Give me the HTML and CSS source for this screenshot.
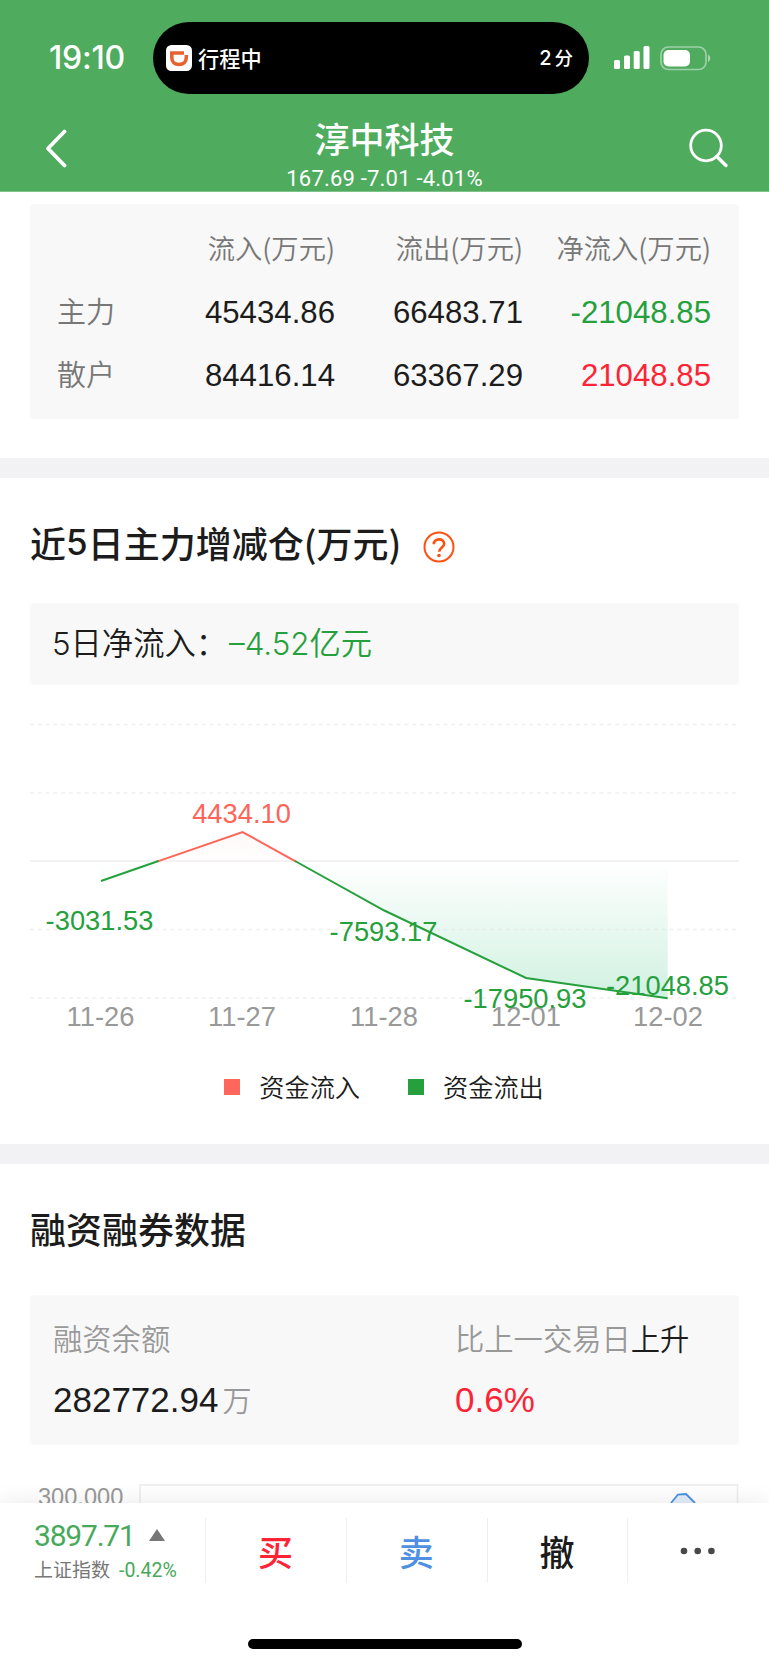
FILE: index.html
```
<!DOCTYPE html>
<html lang="zh-CN">

<head>
  <meta charset="UTF-8" />
  <meta name="viewport" content="width=device-width, initial-scale=1.0" />
  <title>淳中科技</title>
  <link rel="stylesheet" href="styles.css">
</head>

<body>
  <div class="app">
    <!-- Header -->
    <header class="header">
      <div class="status-bar">
        <span class="time">19:10</span>
        <div class="island">
          <svg class="trip-icon" viewBox="0 0 26 26">
            <rect width="26" height="26" rx="5.5" fill="#fff" />
            <path d="M18 8H5.800v4.500c0 4.300 3 7 7.200 7s7.300-2.700 7.300-7V10" fill="none" stroke="#e8622f" stroke-width="3.600" />
          </svg>
          <span class="trip">行程中</span>
          <span class="eta">2<i>分</i></span>
        </div>
        <svg class="signal" viewBox="0 0 36 24" fill="#fff">
          <rect x="0" y="14" width="6" height="9" rx="1.500" />
          <rect x="10" y="9.500" width="6" height="13.500" rx="1.500" />
          <rect x="19.700" y="5" width="6" height="18" rx="1.500" />
          <rect x="29.500" y="0" width="6" height="23" rx="1.500" />
        </svg>
        <svg class="battery" viewBox="0 0 51 25">
          <rect x="1" y="1" width="45" height="22.500" rx="7.500" fill="none" stroke="#fff" stroke-opacity=".45" stroke-width="1.700" />
          <rect x="3.500" y="4" width="26.500" height="16.500" rx="5" fill="#fff" />
          <path d="M48 8.500c3 1.500 3 6 0 7.500z" fill="#fff" fill-opacity=".5" />
        </svg>
      </div>
      <div class="nav-bar">
        <svg class="back" viewBox="0 0 24 40">
          <path d="M19.500 3.500L3 20.500 19.500 37.500" fill="none" stroke="#fff" stroke-width="3.800" stroke-linecap="round" stroke-linejoin="round" />
        </svg>
        <div class="stock">
          <h1>淳中科技</h1>
          <p>167.69 -7.01 -4.01%</p>
        </div>
        <svg class="search" viewBox="0 0 40 40">
          <circle cx="17" cy="17.500" r="15.300" fill="none" stroke="#fff" stroke-width="2.800" />
          <path d="M27.800 28.500L37 37.500" stroke="#fff" stroke-width="3.400" stroke-linecap="round" />
        </svg>
      </div>
    </header>

    <!-- Money flow table -->
    <section class="flow">
      <div class="card flow-table">
        <span></span>
        <span class="th">流入(万元)</span>
        <span class="th">流出(万元)</span>
        <span class="th">净流入(万元)</span>
        <span class="name">主力</span>
        <span class="num">45434.86</span>
        <span class="num">66483.71</span>
        <span class="num green">-21048.85</span>
        <span class="name">散户</span>
        <span class="num">84416.14</span>
        <span class="num">63367.29</span>
        <span class="num red">21048.85</span>
      </div>
    </section>

    <!-- 5 day chart -->
    <section class="five-day">
      <h2>近<i>5</i>日主力增减仓(万元)
        <svg class="help" viewBox="0 0 32 32" fill="none" stroke="#ff5010">
          <circle cx="16" cy="16" r="14.500" stroke-width="2" />
          <path d="M10.800 13.200c0-6.400 10.400-6.400 10.400-.4 0 3.600-5 3.800-5 8" stroke-width="2.600" />
          <circle cx="16" cy="24.500" r="1.800" fill="#ff5010" stroke="none" />
        </svg>
      </h2>
      <div class="card total">5日净流入：<span class="green">–4.52亿元</span></div>
      <svg class="chart" viewBox="0 0 769 340">
        <defs>
          <linearGradient id="out" gradientUnits="userSpaceOnUse" x1="0" y1="161" x2="0" y2="298">
            <stop offset="0" stop-color="#d3f2e2" stop-opacity="0" />
            <stop offset="1" stop-color="#d0f1e1" />
          </linearGradient>
          <linearGradient id="in" x1="0" y1="0" x2="0" y2="1">
            <stop offset="0" stop-color="#ff6459" stop-opacity=".04" />
            <stop offset="1" stop-color="#ff6459" stop-opacity="0.010" />
          </linearGradient>
        </defs>
        <g class="grid">
          <path d="M30 24.500H738M30 93H738M30 229.500H738M30 298H738" stroke-dasharray="4 3.800" />
          <path d="M30 161H739" />
        </g>
        <path d="M158.500 161L242.500 132 295 161z" fill="url(#in)" />
        <path d="M295 161L384.300 210.500 526 278 667.700 298.200V161zM101 161V181L158.500 161z" fill="url(#out)" />
        <g class="dates">
          <text x="100.500" y="326">11-26</text>
          <text x="242" y="326">11-27</text>
          <text x="384" y="326">11-28</text>
          <text x="526" y="326">12-01</text>
          <text x="668" y="326">12-02</text>
        </g>
        <path class="line-in" d="M157 161.600L242.500 132 296 161.600" />
        <path class="line-out" d="M101 181L158.500 161M295 161L384.300 210.500 526 278 667.700 298.200" />
        <g class="values">
          <text x="99.500" y="230">-3031.53</text>
          <text x="241.500" y="123" class="up">4434.10</text>
          <text x="383.500" y="240.500">-7593.17</text>
          <text x="525" y="308">-17950.93</text>
          <text x="667.500" y="295">-21048.85</text>
        </g>
      </svg>
      <div class="legend">
        <span><i class="in"></i>资金流入</span>
        <span><i class="out"></i>资金流出</span>
      </div>
    </section>

    <!-- Margin data -->
    <section class="margin">
      <h2>融资融券数据</h2>
      <div class="card margin-card">
        <div>
          <p class="label">融资余额</p>
          <p class="big">282772.94<small>万</small></p>
        </div>
        <div>
          <p class="label">比上一交易日<b>上升</b></p>
          <p class="big red">0.6%</p>
        </div>
      </div>
      <svg class="margin-chart" viewBox="0 0 769 58">
        <text x="38" y="59.500">300.000</text>
        <path d="M140 80V40H737.500V80" fill="none" stroke="#ececec" stroke-width="1.500" />
        <path d="M671 58L678 49.500 686 49 695 58" fill="#e3edf9" stroke="#4a90e2" stroke-width="1.800" />
      </svg>
    </section>

    <!-- Bottom bar -->
    <footer class="bottom">
      <div class="actions">
        <div class="index">
          <p class="point">3897.71 <i></i></p>
          <p class="index-name">上证指数<span>-0.42%</span></p>
        </div>
        <a class="red">买</a>
        <a class="blue">卖</a>
        <a>撤</a>
        <a>
          <svg class="more" viewBox="0 0 36 8" fill="#484848">
            <circle cx="4" cy="4" r="3.300" />
            <circle cx="17.700" cy="4" r="3.300" />
            <circle cx="31.400" cy="4" r="3.300" />
          </svg>
        </a>
      </div>
      <div class="home"></div>
    </footer>
  </div>
</body>

</html>
```
FILE: styles.css
```
* {
  margin: 0;
  padding: 0;
  box-sizing: border-box;
}

:root {
  --header: #4fab5e;
  --green: #25a03c;
  --red: #fc2435;
  --text: #1c1c1c;
  --card: #f8f8f8;
  --band: #f2f2f4;
}

body {
  background: #fff;
  color: var(--text);
  font-family: "Noto Sans CJK SC", sans-serif;
}

i {
  font-style: normal;
}

.green {
  color: var(--green);
}

.red {
  color: var(--red);
}

.app {
  width: 769px;
  height: 1665px;
  display: flex;
  flex-direction: column;
  overflow: hidden;
}

/* Header */
.header {
  height: 192px;
  background: var(--header);
  border-bottom: 1px solid #7fc38a;
  color: #fff;
  flex: none;
}

.status-bar {
  display: flex;
  align-items: center;
  height: 116px;
  padding-left: 49px;
}

.time {
  width: 104px;
  font: 550 32px/40px Inter, sans-serif;
  letter-spacing: -0.2px;
}

.island {
  width: 436px;
  height: 72px;
  border-radius: 36px;
  background: #000;
  display: flex;
  align-items: center;
  padding: 0 16px 0 13px;
}

.trip-icon {
  width: 26px;
  height: 26px;
}

.trip {
  margin: -2px 0 0 6px;
  font-size: 21.200px;
  font-weight: 500;
}

.eta {
  margin-left: auto;
  font: 500 20px/30px Inter, "Noto Sans CJK SC", sans-serif;
}

.eta i {
  margin-left: 3px;
  font-size: 18.500px;
}

.signal {
  width: 36px;
  height: 24px;
  margin-left: 25px;
}

.battery {
  width: 51px;
  height: 25px;
  margin-left: 10px;
}

.nav-bar {
  display: flex;
  justify-content: space-between;
  padding: 0 40px 0 45px;
}

.back {
  width: 24px;
  height: 40px;
  margin-top: 12px;
}

.stock {
  text-align: center;
  padding-left: 11px;
}

.stock h1 {
  font-size: 35px;
  font-weight: 500;
  line-height: 44px;
}

.stock p {
  margin-top: 4px;
  font: 450 22px/30px Roboto, sans-serif;
  letter-spacing: 0.2px;
}

.search {
  width: 40px;
  height: 40px;
  margin-top: 12px;
}

/* Cards */
.card {
  margin: 0 30px;
  background: var(--card);
  border-radius: 4px;
}

section {
  flex: none;
}

.flow {
  padding-top: 12px;
  height: 286px;
  border-bottom: 20px solid var(--band);
}

.flow-table {
  height: 215px;
  display: grid;
  grid-template-columns: 96px 182px 188px 188px;
  grid-template-rows: 63px 63px 63px;
  padding: 14px 27px 0;
  align-items: center;
  text-align: right;
}

.th,
.name {
  padding-bottom: 5px;
  color: #777;
  font-weight: 350;
}

.th {
  font-size: 27.300px;
}

.name {
  font-size: 29px;
  text-align: left;
}

.num {
  font: 31.200px/40px "Liberation Sans", sans-serif;
}

/* Five day chart */
.five-day {
  height: 686px;
  border-bottom: 20px solid var(--band);
}

h2 {
  display: flex;
  align-items: center;
  height: 125px;
  padding: 3px 30px 0;
  font-size: 36px;
  font-weight: 500;
}

h2 i {
  font: 450 35px/50px Inter, sans-serif;
}

.help {
  width: 32px;
  height: 32px;
  margin: 10px 0 0 22px;
}

.total {
  height: 82px;
  padding-left: 22px;
  font: 31.300px/83px Inter, "Noto Sans CJK SC", sans-serif;
  font-weight: 350;
}

.total span {
  margin-left: 2px;
}

.chart {
  display: block;
  width: 769px;
  height: 340px;
  margin-top: 15px;
  font-family: "Liberation Sans", sans-serif;
  font-size: 27.300px;
}

.chart text {
  text-anchor: middle;
}

.grid path {
  fill: none;
  stroke: #efefef;
  stroke-width: 1.500;
}

.dates {
  fill: #999;
}

.values {
  fill: var(--green);
}

.values .up {
  fill: #ff6459;
}

.line-in,
.line-out {
  fill: none;
  stroke: var(--green);
  stroke-width: 2;
}

.line-in {
  stroke: #ff6459;
}

.legend {
  display: flex;
  justify-content: center;
  gap: 48px;
  margin: 27px 1px 0 0;
  font-size: 25.200px;
  font-weight: 350;
  line-height: 38px;
}

.legend span {
  display: flex;
  align-items: center;
}

.legend i {
  width: 16px;
  height: 16px;
  margin: 2px 19px 0 0;
}

.legend .in {
  background: #ff665c;
}

.legend .out {
  background: var(--green);
}

/* Margin data */
.margin {
  height: 339px;
}

.margin h2 {
  height: 131px;
  padding: 0 30px 3px;
}

.margin-card {
  height: 150px;
  display: flex;
  padding: 20px 23px;
}

.margin-card > div:first-child {
  width: 402px;
}

.label {
  color: #999;
  font-size: 29.300px;
  font-weight: 350;
  line-height: 44px;
}

.label b {
  color: var(--text);
  font-weight: 350;
}

.big {
  margin-top: 16px;
  font: 35px/50px "Liberation Sans", sans-serif;
}

.big small {
  margin-left: 4px;
  color: #999;
  font: 350 29px/40px "Noto Sans CJK SC", sans-serif;
}

.margin-chart {
  display: block;
  width: 769px;
  height: 58px;
  fill: #999;
  font: 23.600px "Liberation Sans", sans-serif;
}

/* Bottom bar */
.bottom {
  position: relative;
  flex: 1;
  background: #fff;
  box-shadow: 0 0 22px rgba(0, 0, 0, 0.09);
}

.actions {
  display: flex;
  padding-top: 15px;
}

.actions a {
  width: 140.800px;
  height: 65px;
  border-left: 1.500px solid #efefef;
  display: flex;
  align-items: center;
  justify-content: center;
  padding-right: 1px;
  font-size: 35px;
  font-weight: 500;
}

.blue {
  color: #4f90e2;
}

.index {
  width: 205px;
  padding-left: 34px;
}

.point {
  display: flex;
  align-items: center;
  font: 450 30px/36px Roboto, sans-serif;
  letter-spacing: -1.200px;
  color: #47a95a;
}

.point i {
  margin: -3px 0 0 14px;
  border: 8.500px solid transparent;
  border-top: 0;
  border-bottom: 12px solid #777;
}

.index-name {
  color: #777;
  font-size: 19px;
  line-height: 30px;
}

.index-name span {
  margin-left: 9px;
  color: #47a95a;
  font: 450 19.500px Roboto, sans-serif;
}

.more {
  width: 36px;
  height: 8px;
}

.home {
  width: 274px;
  height: 10px;
  margin: 55px auto 0;
  border-radius: 5px;
  background: #000;
}
```
